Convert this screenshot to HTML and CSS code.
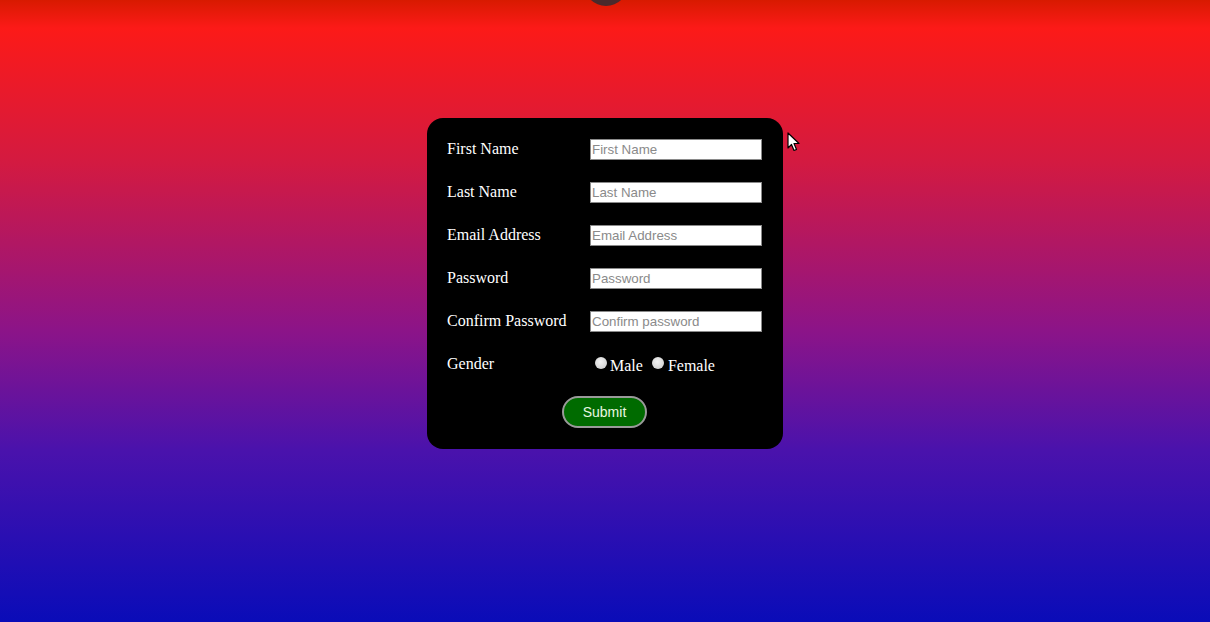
FILE: index.html
```html
<!DOCTYPE html>
<html>
<head>
<meta charset="utf-8">
<link rel="stylesheet" href="styles.css">
</head>
<body>
<div class="cam"></div>
<main class="page">
  <form class="card">
    <div class="grid">
      <label class="lbl">First Name</label>
      <input class="field" type="text" placeholder="First Name">
      <label class="lbl">Last Name</label>
      <input class="field" type="text" placeholder="Last Name">
      <label class="lbl">Email Address</label>
      <input class="field" type="text" placeholder="Email Address">
      <label class="lbl">Password</label>
      <input class="field" type="text" placeholder="Password">
      <label class="lbl">Confirm Password</label>
      <input class="field" type="text" placeholder="Confirm password">
      <label class="lbl">Gender</label>
      <div class="radios">
        <span class="radio"></span><span class="rtext">Male</span>
        <span class="radio r2"></span><span class="rtext">Female</span>
      </div>
    </div>
    <div class="actions"><button type="button" class="submit">Submit</button></div>
  </form>
</main>
<svg class="cursor" width="14" height="20" viewBox="0 0 14 20"><path d="M1 1 L1 16 L4.5 12.5 L7 18.5 L9.5 17.5 L7 11.5 L12 11.5 Z" fill="#fff" stroke="#000" stroke-width="1.2" stroke-linejoin="round"/></svg>
</body>
</html>
```
FILE: styles.css
```css
html, body { margin: 0; height: 100%; }
body {
  background: linear-gradient(#d81a00 0px, #fc1a18 28px, #d41a40 160px, #8c1488 330px, #4a12ac 450px, #0a0cb8 622px);
  font-family: "Liberation Serif", "Times New Roman", serif;
  overflow: hidden;
  position: relative;
}
.cam {
  position: absolute;
  left: 584px;
  top: -38px;
  width: 44px;
  height: 44px;
  border-radius: 50%;
  background: #4a2a2c;
}
.page {
  padding-top: 118px;
  display: flex;
  justify-content: center;
}
.card {
  width: 356px;
  box-sizing: border-box;
  background: #000;
  border-radius: 16px;
  padding: 21px 21px 21px 20px;
  margin: 0;
  height: 331px;
}
.grid {
  display: grid;
  grid-template-columns: 143px 172px;
  grid-auto-rows: 21px;
  row-gap: 22px;
  align-items: center;
}
.lbl {
  color: #fff;
  font-size: 16px;
  line-height: 21px;
  position: relative;
  top: -1px;
}
.field {
  box-sizing: border-box;
  width: 172px;
  height: 21px;
  margin: 0;
  border: 1px solid #8a8a8a;
  background: #fff;
  padding: 0 1px;
  font-family: "Liberation Sans", Arial, sans-serif;
  font-size: 13.333px;
}
.field::placeholder { color: #8a8a8a; }
.radios {
  display: flex;
  align-items: center;
  padding-left: 5px;
  color: #fff;
  font-size: 16px;
}
.radio {
  width: 12px;
  height: 12px;
  border-radius: 50%;
  background: radial-gradient(circle at 45% 40%, #f2f2f2, #c8c8c8);
  margin-right: 3px;
  position: relative;
  top: -2px;
}
.r2 { margin-left: 9px; }
.rtext { line-height: 21px; position: relative; top: 1px; }
.rtext + .r2 + .rtext { margin-left: 1px; }
.actions {
  display: flex;
  justify-content: center;
  margin-top: 21px;
}
.submit {
  width: 85px;
  height: 32px;
  border-radius: 16px;
  background: #006b00;
  border: 2px solid #9a9a9a;
  color: #e8f8e0;
  font-family: "Liberation Sans", Arial, sans-serif;
  font-size: 14px;
  padding: 0;
}
.cursor {
  position: absolute;
  left: 787px;
  top: 132px;
}
```
